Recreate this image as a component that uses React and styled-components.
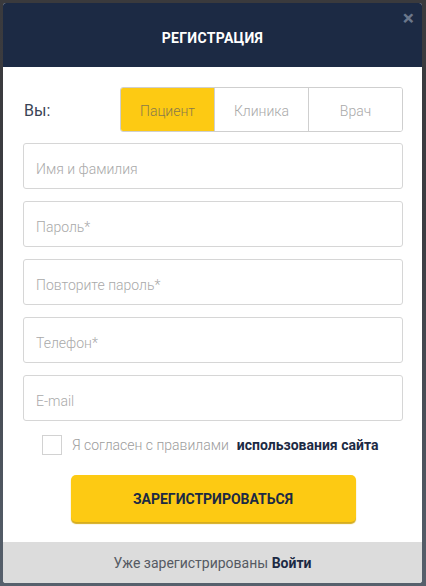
import React, { useState } from 'react';
import styled, { createGlobalStyle } from 'styled-components';

const GlobalStyle = createGlobalStyle`
  html, body {
    margin: 0;
    padding: 0;
  }
  body {
    width: 426px;
    height: 586px;
    overflow: hidden;
    font-family: Roboto, "Liberation Sans", Arial, sans-serif;
    background: linear-gradient(180deg, #3a3a3d 0%, #3c3d42 40%, #56606c 100%);
  }
`;

// backdrop and modal frame
const Backdrop = styled.div`
  width: 426px;
  height: 586px;
  padding: 3px 4px 3px 3px;
  box-sizing: border-box;
`;

const Modal = styled.div`
  position: relative;
  width: 419px;
  height: 580px;
  display: flex;
  flex-direction: column;
  background: #fff;
  border-radius: 3px;
  overflow: hidden;
`;

const Header = styled.div`
  height: 64px;
  background: #1c2a44;
  display: flex;
  align-items: center;
  justify-content: center;
  padding-top: 5px;
  box-sizing: border-box;
`;

const Title = styled.h2`
  margin: 0;
  color: #fff;
  font-size: 14px;
  font-weight: 700;
  letter-spacing: 0.3px;
`;

const Close = styled.span`
  position: absolute;
  top: 5px;
  right: 8px;
  color: #6b778b;
  font-size: 21px;
  font-weight: 700;
  line-height: 20px;
  cursor: pointer;
`;

const Body = styled.div`
  flex: 1;
  padding: 20px 19px 0 20px;
  display: flex;
  flex-direction: column;
`;

// role switcher
const RoleRow = styled.div`
  display: flex;
  align-items: center;
  justify-content: space-between;
  margin-bottom: 11px;
`;

const RoleLabel = styled.span`
  font-size: 16px;
  color: #3a4456;
  padding: 2px 0 0 1px;
`;

const Segments = styled.div`
  display: flex;
  width: 283px;
  height: 45px;
  border: 1px solid #cfcfcf;
  border-radius: 3px;
  box-sizing: border-box;
  overflow: hidden;
`;

const Segment = styled.button`
  flex: 1;
  border: none;
  border-left: ${({ $first }) => ($first ? 'none' : '1px solid #cfcfcf')};
  background: ${({ $active }) => ($active ? '#fdca13' : '#fff')};
  color: ${({ $active }) => ($active ? '#8a7a4a' : '#a9a9a9')};
  font-family: inherit;
  font-size: 14px;
  font-weight: 300;
  padding: 2px 0 0;
  cursor: pointer;
`;

const Fields = styled.div`
  display: flex;
  flex-direction: column;
  gap: 12px;
`;

const Input = styled.input`
  width: 380px;
  height: 46px;
  box-sizing: border-box;
  border: 1px solid #d6d6d6;
  border-radius: 3px;
  padding: 5px 12px 0;
  font-family: inherit;
  font-size: 14px;
  font-weight: 300;
  color: #333;
  outline: none;
  &::placeholder {
    color: #a9a9a9;
  }
`;

const Agree = styled.label`
  display: flex;
  align-items: center;
  margin: 14px 0 0 19px;
  height: 20px;
  font-size: 14px;
  font-weight: 300;
  color: #9c9c9c;
`;

const Box = styled.span`
  width: 20px;
  height: 20px;
  box-sizing: border-box;
  border: 1px solid #d2d2d2;
  margin-right: 10px;
  background: #fff;
`;

const Strong = styled.b`
  color: #1c2a44;
  font-weight: 700;
  margin-left: ${({ $gap }) => $gap || 0}px;
`;

const Submit = styled.button`
  align-self: center;
  margin: 20px 0 0 0;
  width: 285px;
  height: 47px;
  border: none;
  border-radius: 5px;
  background: #fdca13;
  box-shadow: 0 2px 1px #d6ad1e;
  color: #1c2a44;
  font-family: inherit;
  font-size: 14px;
  font-weight: 700;
  padding-top: 1px;
  cursor: pointer;
`;

const Footer = styled.div`
  height: 41px;
  background: #dcdcdc;
  display: flex;
  align-items: center;
  justify-content: center;
  font-size: 14px;
  color: #555a63;
`;

const roles = ['Пациент', 'Клиника', 'Врач'];
const fields = ['Имя и фамилия', 'Пароль*', 'Повторите пароль*', 'Телефон*', 'E-mail'];

const App = () => {
  const [role, setRole] = useState(0);
  return (
    <>
      <GlobalStyle />
      <Backdrop>
        <Modal>
          <Header>
            <Title>РЕГИСТРАЦИЯ</Title>
          </Header>
          <Close>×</Close>
          <Body>
            <RoleRow>
              <RoleLabel>Вы:</RoleLabel>
              <Segments>
                {roles.map((r, i) => (
                  <Segment key={r} $first={i === 0} $active={role === i} onClick={() => setRole(i)}>
                    {r}
                  </Segment>
                ))}
              </Segments>
            </RoleRow>
            <Fields>
              {fields.map((f) => (
                <Input key={f} placeholder={f} type={f.startsWith('Пароль') || f.startsWith('Повторите') ? 'password' : 'text'} />
              ))}
            </Fields>
            <Agree>
              <Box />
              Я согласен с правилами <Strong $gap={8}>использования сайта</Strong>
            </Agree>
            <Submit>ЗАРЕГИСТРИРОВАТЬСЯ</Submit>
          </Body>
          <Footer>
            Уже зарегистрированы&nbsp;<Strong>Войти</Strong>
          </Footer>
        </Modal>
      </Backdrop>
    </>
  );
};

export default App;
